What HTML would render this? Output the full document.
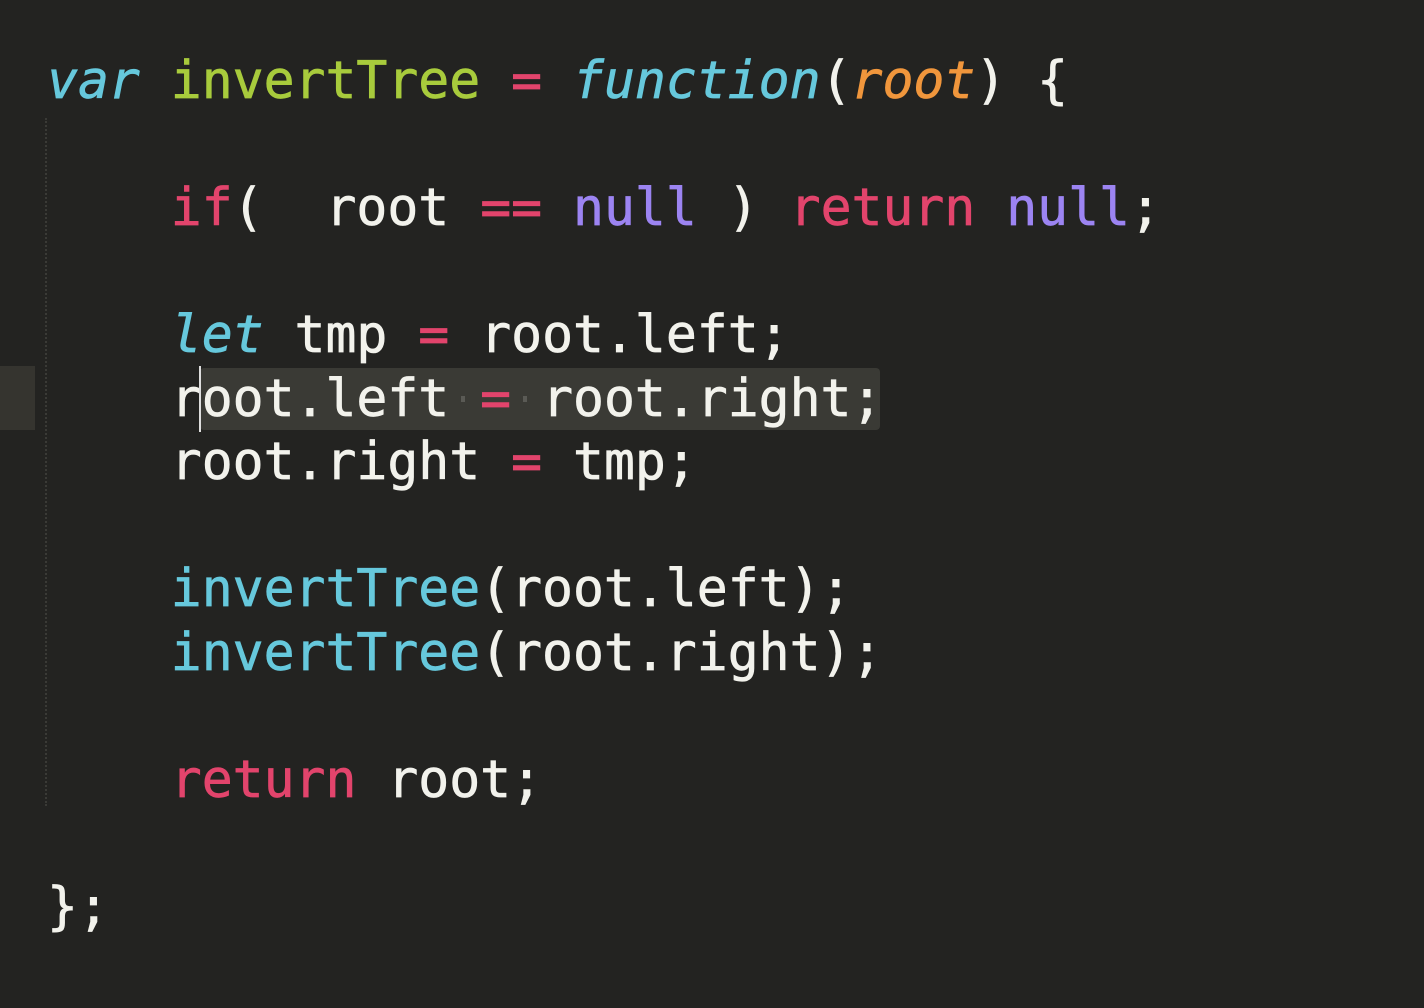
<!DOCTYPE html>
<html><head><meta charset="utf-8"><style>
html,body{margin:0;padding:0;background:#232321;width:1424px;height:1008px;overflow:hidden;position:relative}
pre{position:absolute;left:47px;top:50px;margin:0;font-family:"DejaVu Sans Mono","Liberation Mono",monospace;font-size:51.4px;line-height:63.5px;color:#f2f2ec;-webkit-text-stroke:0.7px currentColor}
.k{color:#e2446c}.g{color:#a8cb3c}.b{color:#66c8dc}.i{font-style:italic}.p{color:#9c84f2}.o{color:#f0963c;font-style:italic}
.hl{position:absolute;left:200px;top:368px;width:680px;height:62px;background:#3a3a35;border-radius:4px}
.gut{position:absolute;left:0;top:366px;width:35px;height:64px;background:#35342f}
.guide{position:absolute;left:45px;top:118px;height:688px;border-left:2px dotted #3a3a36}
.cur{position:absolute;left:199px;top:366px;width:2px;height:66px;background:#ddd}
.dot{position:absolute;width:4px;height:6px;background:#5a5a55;top:396px}
</style></head><body>
<div class="gut"></div><div class="hl"></div><div class="guide"></div>
<div class="dot" style="left:461px"></div><div class="dot" style="left:523px"></div>
<pre><span class="b i">var</span> <span class="g">invertTree</span> <span class="k">=</span> <span class="b i">function</span>(<span class="o">root</span>) {

    <span class="k">if</span>(  root <span class="k">==</span> <span class="p">null</span> ) <span class="k">return</span> <span class="p">null</span>;

    <span class="b i">let</span> tmp <span class="k">=</span> root.left;
    root.left <span class="k">=</span> root.right;
    root.right <span class="k">=</span> tmp;

    <span class="b">invertTree</span>(root.left);
    <span class="b">invertTree</span>(root.right);

    <span class="k">return</span> root;

};</pre>
<div class="cur"></div>
</body></html>
